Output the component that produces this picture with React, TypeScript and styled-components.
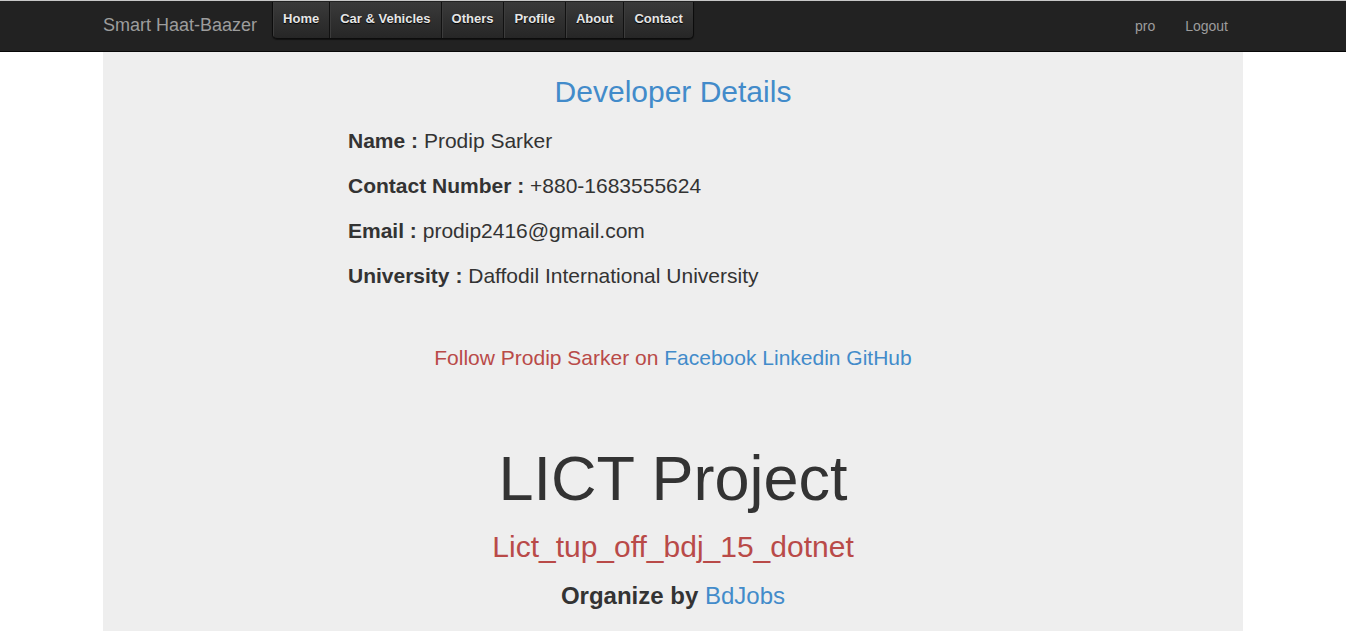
import styled, { createGlobalStyle } from "styled-components";

const menuItems = ["Home", "Car & Vehicles", "Others", "Profile", "About", "Contact"];

const details = [
  { label: "Name", value: "Prodip Sarker" },
  { label: "Contact Number", value: "+880-1683555624" },
  { label: "Email", value: "prodip2416@gmail.com" },
  { label: "University", value: "Daffodil International University" },
];

export default function App() {
  return (
    <>
      <GlobalStyle />
      <Navbar>
        <NavInner>
          <Brand>Smart Haat-Baazer</Brand>
          <Menu>
            {menuItems.map((item) => (
              <MenuItem key={item}>{item}</MenuItem>
            ))}
          </Menu>
          <RightLinks>
            <RightLink>pro</RightLink>
            <RightLink>Logout</RightLink>
          </RightLinks>
        </NavInner>
      </Navbar>

      <Content>
        <Title>Developer Details</Title>
        <DetailList>
          {details.map((d) => (
            <DetailRow key={d.label}>
              <b>{d.label} :</b> {d.value}
            </DetailRow>
          ))}
        </DetailList>

        <Follow>
          Follow Prodip Sarker on <Link>Facebook</Link> <Link>Linkedin</Link>{" "}
          <Link>GitHub</Link>
        </Follow>

        <ProjectTitle>LICT Project</ProjectTitle>
        <BatchName>Lict_tup_off_bdj_15_dotnet</BatchName>
        <Organizer>
          <b>Organize by</b> <Link>BdJobs</Link>
        </Organizer>
      </Content>
    </>
  );
}

const GlobalStyle = createGlobalStyle`
  body {
    margin: 0;
    width: 1346px;
    background: #fff;
    font-family: "Liberation Sans", Arial, sans-serif;
    color: #333;
    overflow: hidden;
  }
`;

const Navbar = styled.div`
  background: #222;
  border-top: 1px solid #c8c8c8;
  border-bottom: 1px solid #080808;
  height: 50px;
`;

const NavInner = styled.div`
  width: 1140px;
  margin: 0 auto;
  display: flex;
  align-items: flex-start;
  height: 100%;
`;

const Brand = styled.div`
  font-size: 18px;
  color: #9d9d9d;
  line-height: 48px;
  padding-right: 15px;
`;

const Menu = styled.ul`
  display: flex;
  margin: 1px 0 0;
  padding: 0;
  list-style: none;
  height: 36px;
  border: 1px solid #0c0c0c;
  border-top: none;
  border-radius: 0 0 5px 5px;
  background: linear-gradient(#3a3a3a, #262626);
  box-shadow: 0 1px 1px rgba(0, 0, 0, 0.5);
  overflow: hidden;
`;

const MenuItem = styled.li`
  padding: 0 10px;
  font-size: 13px;
  font-weight: bold;
  line-height: 33px;
  color: #e6e6e6;
  text-shadow: 0 1px 1px #000;
  border-right: 1px solid #111;
  box-shadow: inset 1px 0 0 #3c3c3c;

  &:last-child {
    border-right: none;
  }
`;

const RightLinks = styled.div`
  margin-left: auto;
  display: flex;
`;

const RightLink = styled.span`
  padding: 0 15px;
  font-size: 14px;
  line-height: 50px;
  color: #9d9d9d;
`;

const Content = styled.div`
  width: 1140px;
  margin: 0 auto;
  background: #eee;
  height: 600px;
  padding-top: 23px;
  box-sizing: border-box;
`;

const Title = styled.h3`
  margin: 0;
  text-align: center;
  font-size: 30px;
  font-weight: normal;
  line-height: 33px;
  color: #428bca;
`;

const DetailList = styled.div`
  margin-top: 18px;
  padding-left: 245px;
`;

const DetailRow = styled.p`
  margin: 0 0 15px;
  font-size: 21px;
  line-height: 30px;

  &:last-child {
    margin-bottom: 0;
  }
`;

const Follow = styled.p`
  margin: 52px 0 0;
  text-align: center;
  font-size: 21px;
  line-height: 30px;
  color: #b94a48;
`;

const Link = styled.span`
  color: #428bca;
`;

const ProjectTitle = styled.h1`
  margin: 70px 0 0;
  text-align: center;
  font-size: 63px;
  font-weight: normal;
  line-height: 70px;
`;

const BatchName = styled.h3`
  margin: 17px 0 0;
  text-align: center;
  font-size: 30px;
  font-weight: normal;
  line-height: 33px;
  color: #b94a48;
`;

const Organizer = styled.h4`
  margin: 20px 0 0;
  text-align: center;
  font-size: 24px;
  font-weight: normal;
  line-height: 26px;
`;
